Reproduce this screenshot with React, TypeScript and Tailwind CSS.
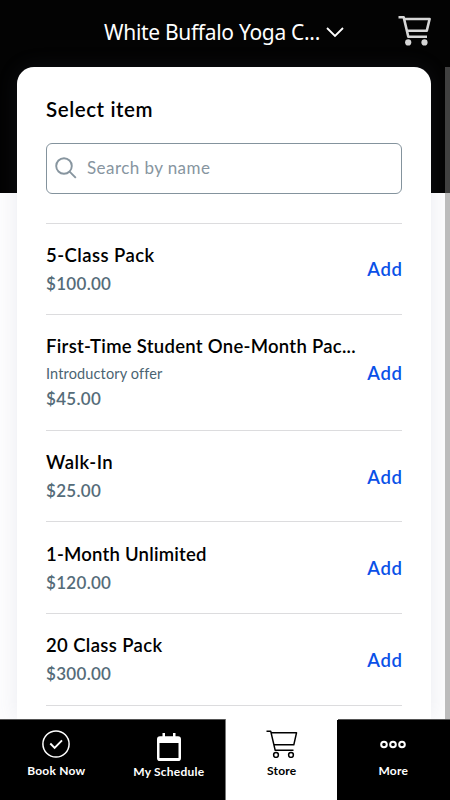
import React from "react";

type Item = {
  name: string;
  price: string;
  note?: string;
  tracking: string;
  height: string;
};

const items: Item[] = [
  { name: "5-Class Pack", price: "$100.00", tracking: "tracking-[0.45px]", height: "h-[91.7px]" },
  { name: "First-Time Student One-Month Pac...", price: "$45.00", note: "Introductory offer", tracking: "tracking-[0.28px]", height: "h-[115.5px]" },
  { name: "Walk-In", price: "$25.00", tracking: "tracking-[0.5px]", height: "h-[91.7px]" },
  { name: "1-Month Unlimited", price: "$120.00", tracking: "tracking-[0.22px]", height: "h-[91.7px]" },
  { name: "20 Class Pack", price: "$300.00", tracking: "tracking-[0.37px]", height: "h-[91.7px]" },
];

function Row({ item }: { item: Item }) {
  return (
    <li className={`flex items-center justify-between border-t border-[#dcdcde] ${item.height}`}>
      <div className="whitespace-nowrap">
        <div className={`h-7 text-[18.5px] leading-7 font-semibold text-black ${item.tracking}`}>{item.name}</div>
        {item.note && <div className="h-[24px] text-[14.5px] leading-[27px] text-[#4b6472] tracking-[0.14px]">{item.note}</div>}
        <div className="h-7 text-[17px] leading-[29.5px] font-semibold tracking-[0.3px] text-[#556c79]">{item.price}</div>
      </div>
      <button className="-mr-[0.5px] pt-px text-[18.5px] leading-7 font-semibold tracking-[0.6px] text-[#0a50e8]">Add</button>
    </li>
  );
}

function HeaderCart() {
  return (
    <svg viewBox="0 0 34 31" className="mt-[15px] ml-[54px] h-[31px] w-[34px] text-[#d6d6d6]" fill="none" stroke="currentColor" strokeWidth="2.6" strokeLinejoin="round">
      <path d="M0.5 2.3H5.7L10.3 21.8H29M6 4H31.6L28.8 15.8H9" />
      <g fill="currentColor" stroke="none">
        <circle cx="10.2" cy="27.4" r="3.1" />
        <circle cx="26.5" cy="27.4" r="3.1" />
      </g>
    </svg>
  );
}

function StoreCart() {
  return (
    <svg viewBox="0 0 32 28" className="h-7 w-8" fill="none" stroke="currentColor" strokeWidth="1.5" strokeLinejoin="round">
      <path d="M0.5 1.2H4.7L9.2 20.3H27.5M5.2 2.8H30.5L27.8 14.8H8" />
      <circle cx="10" cy="25" r="2.4" />
      <circle cx="25" cy="25" r="2.4" />
    </svg>
  );
}

export default function App() {
  return (
    <div className="relative flex h-[800px] w-[450px] flex-col overflow-hidden bg-[linear-gradient(#030303_193px,#fdfdfe_193px)] font-['Lato','Open_Sans',sans-serif]">
      <header className="flex h-[67px] shrink-0 items-start pl-[104px] text-white">
        <h1 className="mt-[18px] w-[216px] whitespace-nowrap font-['Noto_Sans',sans-serif] text-[21px] leading-7 tracking-[-0.31px]">White Buffalo Yoga C...</h1>
        <svg viewBox="0 0 18 11" className="mt-[27px] ml-[6px] h-[11px] w-[18px]" fill="none" stroke="currentColor" strokeWidth="1.8"><path d="m1 1 8 8 8-8" /></svg>
        <HeaderCart />
      </header>

      <div className="flex h-[652px] shrink-0 justify-between pl-[17px]">
        <main className="h-full w-[414px] rounded-t-[17px] bg-white px-[29px] pt-[28px] shadow-[0_0_22px_rgba(100,110,140,0.12)]">
          <h2 className="h-7 text-[20.5px] leading-[29px] font-semibold tracking-[0.58px] text-black">Select item</h2>
          <label className="mt-[20px] flex h-[50.5px] items-center rounded-[6px] border border-[#84939d] pl-[8px] text-[#87959f]">
            <svg viewBox="0 0 22 22" className="h-[22px] w-[22px]" fill="none" stroke="currentColor" strokeWidth="1.9"><circle cx="9" cy="9" r="7.8" /><path d="m14.6 14.6 6.2 6.2" /></svg>
            <span className="ml-[10px] pb-px text-[17px] leading-6 tracking-[0.43px]">Search by name</span>
          </label>
          <ul className="mt-[29px] border-b border-[#dcdcde]">
            {items.map((item) => <Row key={item.name} item={item} />)}
          </ul>
        </main>
        <div className="h-full w-[5px] bg-[linear-gradient(#404040_126px,#bcbcbc_126px)]" />
      </div>

      <nav className="z-10 grid h-[81px] shrink-0 grid-cols-4 border-t border-[#555] bg-black text-center text-[12px] font-bold leading-4 tracking-[0.22px] text-white">
        <div className="flex flex-col items-center pt-[10px]">
          <svg viewBox="0 0 28 28" className="size-7" fill="none" stroke="currentColor" strokeWidth="1.5"><circle cx="14" cy="14" r="13.1" /><path d="m8.3 13.5 4.3 4.3 7.4-7.5" strokeWidth="1.9" /></svg>
          <span className="mt-[5px]">Book Now</span>
        </div>
        <div className="flex flex-col items-center pt-[13px]">
          <svg viewBox="0 0 26 28" className="h-7 w-[26px]" fill="currentColor"><path fillRule="evenodd" d="M6.5 0h2.5v3.2h8V0h2.5v3.2h2.5a3 3 0 0 1 3 3v19a3 3 0 0 1-3 3H4a3 3 0 0 1-3-3v-19a3 3 0 0 1 3-3h2.5zM3.5 10v15h19V10z" /></svg>
          <span className="mt-[3px]">My Schedule</span>
        </div>
        <div className="-mt-px flex flex-col items-center border-l border-[#777] bg-white pt-[11px] text-black">
          <StoreCart />
          <span className="mt-[5px]">Store</span>
        </div>
        <div className="-ml-px flex flex-col items-center bg-black pt-[10px]">
          <svg viewBox="0 0 26 28" className="h-7 w-[26px]" fill="none" stroke="currentColor" strokeWidth="2"><circle cx="4" cy="14.5" r="2.8" /><circle cx="13" cy="14.5" r="2.8" /><circle cx="22" cy="14.5" r="2.8" /></svg>
          <span className="mt-[5px]">More</span>
        </div>
      </nav>
    </div>
  );
}
